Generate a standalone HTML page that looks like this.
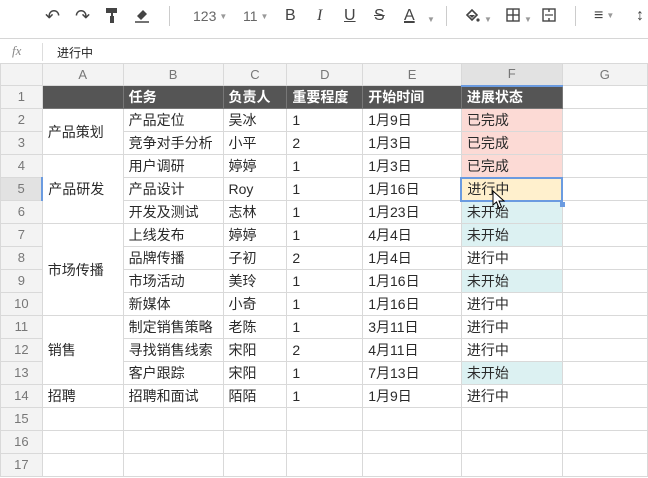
<!DOCTYPE html>
<html><head><meta charset="utf-8"><style>
*{margin:0;padding:0;box-sizing:border-box}
body{width:648px;height:478px;overflow:hidden;background:#fff;font-family:"Liberation Sans","Noto Sans CJK SC",sans-serif;position:relative}
.tb{position:absolute;top:0;left:0;width:648px;height:38px;background:#fff}
.ic{position:absolute;top:6px;font-size:16px;color:#444;line-height:20px}
.sep{position:absolute;top:6px;width:1px;height:20px;background:#ccc}
.dd{font-size:8px;color:#999;margin-left:3px;vertical-align:middle}
.fx{position:absolute;top:38px;left:0;width:648px;height:26px;border-top:1px solid #d6d6d6}
table{position:absolute;top:63px;left:0;border-collapse:collapse;table-layout:fixed;font-size:14px;color:#2a2a2a}
td{border:1px solid #d9d9d9;height:23px;padding:0 0 0 5px;white-space:nowrap;overflow:hidden;line-height:20px}
td.h{background:#f3f3f3;color:#777;text-align:center;padding:0;font-size:13px}
tr.ch td{height:22px}
tr.hd td{background:#555;color:#fff;font-weight:bold;border-color:#777}
tr.hd td.h{background:#f3f3f3;color:#777;font-weight:normal;border-color:#d9d9d9}
.p{background:#fcdad5}.y{background:#fff0cd}.c{background:#dcf1f2}
</style></head><body>
<div class="tb">
<span class="ic" style="left:45px;font-size:18px">&#x21B6;</span>
<span class="ic" style="left:75px;font-size:18px">&#x21B7;</span>
<svg style="position:absolute;left:106px;top:8px" width="13" height="16"><rect x="0" y="0" width="11" height="5" fill="#444"/><rect x="5" y="5" width="2" height="3" fill="#444"/><rect x="4" y="8" width="4" height="7" fill="#444"/></svg>
<svg style="position:absolute;left:134px;top:7px" width="16" height="17"><path d="M3 9 L9 3 L13 7 L7 13 Z" fill="#444"/><line x1="1" y1="15" x2="15" y2="15" stroke="#444" stroke-width="1.5"/></svg>
<div class="sep" style="left:169px"></div>
<span class="ic" style="left:193px;font-size:14px;color:#666">123<span class="dd">▼</span></span>
<span class="ic" style="left:243px;font-size:14px;color:#666">11<span class="dd">▼</span></span>
<span class="ic" style="left:285px">B</span>
<span class="ic" style="left:317px;font-family:'Liberation Serif',serif;font-style:italic">I</span>
<span class="ic" style="left:344px;text-decoration:underline">U</span>
<span class="ic" style="left:374px;text-decoration:line-through">S</span>
<span class="ic" style="left:404px;text-decoration:underline;text-decoration-thickness:2px">A</span><span class="ic dd" style="left:424px;top:10px">▼</span>
<div class="sep" style="left:446px"></div>
<svg style="position:absolute;left:465px;top:8px" width="16" height="16"><path d="M2 7 L7 2 L12 7 L7 12 Z" fill="none" stroke="#444" stroke-width="1.6"/><path d="M4 7 L10 7 L7 10 Z" fill="#444"/><circle cx="13" cy="12" r="1.6" fill="#444"/></svg><span class="ic dd" style="left:481px;top:10px">▼</span>
<svg style="position:absolute;left:506px;top:8px" width="14" height="14"><rect x="1" y="1" width="12" height="12" fill="none" stroke="#444" stroke-width="1.4"/><line x1="7" y1="1" x2="7" y2="13" stroke="#444" stroke-width="1.4"/><line x1="1" y1="7" x2="13" y2="7" stroke="#444" stroke-width="1.4"/></svg><span class="ic dd" style="left:521px;top:10px">▼</span>
<svg style="position:absolute;left:542px;top:8px" width="14" height="14"><rect x="1" y="1" width="12" height="12" fill="none" stroke="#444" stroke-width="1.4"/><line x1="7" y1="1" x2="7" y2="4" stroke="#444" stroke-width="1.4"/><line x1="7" y1="10" x2="7" y2="13" stroke="#444" stroke-width="1.4"/><line x1="3" y1="7" x2="11" y2="7" stroke="#444" stroke-width="1.2"/></svg>
<div class="sep" style="left:575px"></div>
<span class="ic" style="left:594px">&#x2261;<span class="dd">▼</span></span>
<span class="ic" style="left:636px">&#x2195;</span>
</div>
<div class="fx"><span style="position:absolute;left:12px;top:4px;font-family:'Liberation Serif',serif;font-style:italic;color:#888;font-size:13px">fx</span><div style="position:absolute;left:42px;top:4px;width:1px;height:18px;background:#ddd"></div><span style="position:absolute;left:57px;top:5px;font-size:12px;color:#222">进行中</span></div>
<table>
<colgroup><col style="width:42px"><col style="width:81px"><col style="width:100px"><col style="width:64px"><col style="width:76px"><col style="width:99px"><col style="width:101px"><col style="width:86px"></colgroup>
<tr class="ch"><td class="h" style="background:#f3f3f3"></td><td class="h">A</td><td class="h">B</td><td class="h">C</td><td class="h">D</td><td class="h">E</td><td class="h" style="background:#e2e2e2;border-bottom:2px solid #6b9be0">F</td><td class="h">G</td></tr>
<tr class="hd"><td class="h">1</td><td></td><td>任务</td><td>负责人</td><td>重要程度</td><td>开始时间</td><td>进展状态</td><td style="background:#fff;border-color:#d9d9d9"></td></tr>
<tr><td class="h">2</td><td rowspan="2">产品策划</td><td>产品定位</td><td>吴冰</td><td>1</td><td>1月9日</td><td class="p">已完成</td><td></td></tr>
<tr><td class="h">3</td><td>竞争对手分析</td><td>小平</td><td>2</td><td>1月3日</td><td class="p">已完成</td><td></td></tr>
<tr><td class="h">4</td><td rowspan="3">产品研发</td><td>用户调研</td><td>婷婷</td><td>1</td><td>1月3日</td><td class="p">已完成</td><td></td></tr>
<tr><td class="h" style="background:#e2e2e2;border-right:2px solid #6b9be0">5</td><td>产品设计</td><td>Roy</td><td>1</td><td>1月16日</td><td class="y" style="border:2px solid #6b9be0">进行中</td><td></td></tr>
<tr><td class="h">6</td><td>开发及测试</td><td>志林</td><td>1</td><td>1月23日</td><td class="c">未开始</td><td></td></tr>
<tr><td class="h">7</td><td rowspan="4">市场传播</td><td>上线发布</td><td>婷婷</td><td>1</td><td>4月4日</td><td class="c">未开始</td><td></td></tr>
<tr><td class="h">8</td><td>品牌传播</td><td>子初</td><td>2</td><td>1月4日</td><td>进行中</td><td></td></tr>
<tr><td class="h">9</td><td>市场活动</td><td>美玲</td><td>1</td><td>1月16日</td><td class="c">未开始</td><td></td></tr>
<tr><td class="h">10</td><td>新媒体</td><td>小奇</td><td>1</td><td>1月16日</td><td>进行中</td><td></td></tr>
<tr><td class="h">11</td><td rowspan="3">销售</td><td>制定销售策略</td><td>老陈</td><td>1</td><td>3月11日</td><td>进行中</td><td></td></tr>
<tr><td class="h">12</td><td>寻找销售线索</td><td>宋阳</td><td>2</td><td>4月11日</td><td>进行中</td><td></td></tr>
<tr><td class="h">13</td><td>客户跟踪</td><td>宋阳</td><td>1</td><td>7月13日</td><td class="c">未开始</td><td></td></tr>
<tr><td class="h">14</td><td>招聘</td><td>招聘和面试</td><td>陌陌</td><td>1</td><td>1月9日</td><td>进行中</td><td></td></tr>
<tr><td class="h">15</td><td></td><td></td><td></td><td></td><td></td><td></td><td></td></tr>
<tr><td class="h">16</td><td></td><td></td><td></td><td></td><td></td><td></td><td></td></tr>
<tr><td class="h">17</td><td></td><td></td><td></td><td></td><td></td><td></td><td></td></tr>
</table>
<div style="position:absolute;left:560px;top:202px;width:5px;height:5px;background:#6b9be0"></div>
<svg style="position:absolute;left:492px;top:190px" width="14" height="20"><path d="M1 1 L1 15 L4.5 12 L7 18 L9.5 17 L7 11 L12 11 Z" fill="#fff" stroke="#000" stroke-width="1"/></svg>
</body></html>
